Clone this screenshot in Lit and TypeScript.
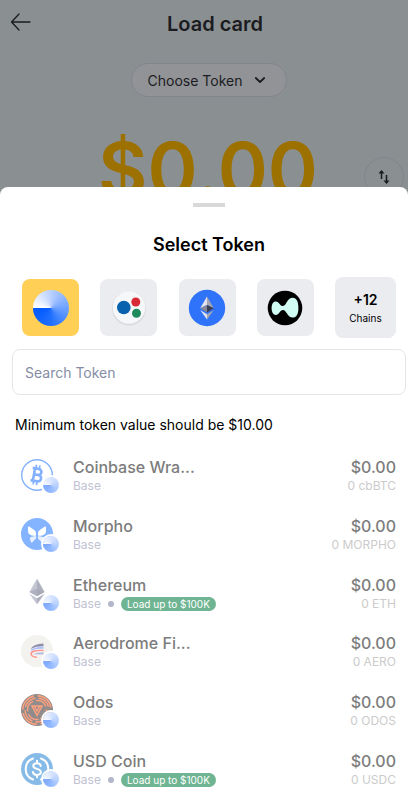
import { LitElement, html, css, svg, nothing, type TemplateResult } from "lit";
import { customElement, property } from "lit/decorators.js";

interface Token {
  name: string;
  symbol: string;
  promo?: boolean;
  icon: TemplateResult;
}

const ethereum = (cx: number, cy: number, s: number) => svg`
  <g transform="translate(${cx} ${cy}) scale(${s})">
    <path d="M0-13-8 1 0-3z" fill="#e3e4ea" />
    <path d="M0-13 8 1 0-3z" fill="#a3a5b0" />
    <path d="M-8 1 0-3V6z" fill="#85879a" />
    <path d="M8 1 0-3V6z" fill="#3d3f52" />
    <path d="M-8 3 0 8V14z" fill="#e3e4ea" />
    <path d="M8 3 0 8V14z" fill="#a3a5b0" />
  </g>`;

const bitcoinIcon = html`<svg viewBox="0 0 32 32" aria-hidden="true">
  <circle cx="16" cy="16" r="15.3" fill="#fff" stroke="#0b66ff" stroke-width="1.4" />
  <g transform="rotate(10 16 16)" fill="none" stroke="#0b66ff" stroke-width="2.6">
    <path d="M10.5 9.7h6.300a3 3 0 0 1 0 6.100h-4h4.600a3.200 3.200 0 0 1 0 6.400h-6.900M12.900 9.500v12.600" />
    <path d="M13.800 6v3.500M17.200 6v3.500M13.800 22.500V26M17.200 22.500V26" stroke-width="1.700" />
  </g>
</svg>`;

const morphoIcon = html`<svg viewBox="0 0 32 32" aria-hidden="true">
  <circle cx="16" cy="16" r="16" fill="#0b6bff" />
  <path d="M7 9.200c0-.7.6-1 1.200-.6l5 3.400c1.200.9 1.800 2 1.800 3.600v1.800c-1 .5-2.400.4-4 0C8 16.700 7 15.500 7 13z" fill="#fff" />
  <path d="M25 9.200c0-.7-.6-1-1.200-.6l-5 3.400c-1.200.9-1.800 2-1.800 3.600v1.800c1 .5 2.400.4 4 0 3-.7 4-1.900 4-4.400z" fill="#fff" />
  <path d="M15 18v2.500l-3.600 3.800c-.6.5-1.300.4-1.500-.3l-.9-3c-.4-1.500.5-2 2-2.300zM17 18v2.500l3.600 3.800c.6.5 1.300.4 1.500-.3l.9-3c.4-1.500-.5-2-2-2.300z" fill="#fff" fill-opacity=".8" />
</svg>`;

const ethereumIcon = html`<svg viewBox="0 0 32 32" aria-hidden="true">
  <g transform="translate(16 14) scale(.95)">
    <path d="M0-13-8 1 0 5.500z" fill="#8a8ca6" />
    <path d="M0-13 8 1 0 5.500z" fill="#62647f" />
    <path d="M-8 1 0-2.500 8 1 0 5.500z" fill="#4a4c69" fill-opacity=".6" />
    <path d="M-8 3 0 7.500V14z" fill="#8a8ca6" />
    <path d="M8 3 0 7.500V14z" fill="#62647f" />
  </g>
</svg>`;

const aerodromeIcon = html`<svg viewBox="0 0 32 32" aria-hidden="true">
  <circle cx="16" cy="16" r="16" fill="#e8e6df" />
  <path d="M10 13.500C12 10.500 16 8.800 22.500 8.500v2.800c-5.500 0-9 .6-12.500 2.700z" fill="#1b1f5a" />
  <path d="M10 15c3-2.300 7-3.300 12.500-3.300v2c-5.500-.3-9.500.3-12.500 2.500z" fill="#5f83ff" />
  <path d="M22.500 15.500c-7-.6-12.500 1-12.500 3.200 0 1.900 2.200 3.200 6 3.700" fill="none" stroke="#ff2a1a" stroke-width="1.400" />
  <path d="M12 19.500c2-1.600 6-2.300 10.500-2v2c-4.500-.3-8 0-10.500 0z" fill="#5d72c9" />
</svg>`;

const odosIcon = html`<svg viewBox="0 0 32 32" aria-hidden="true">
  <circle cx="16" cy="16" r="16" fill="#241c1c" />
  <g fill="none" stroke="#ff4300" stroke-width="1.400">
    <circle cx="16" cy="16" r="14.300" stroke-dasharray="19 3.500" />
    <circle cx="16" cy="16" r="11.900" stroke-dasharray="14 3" transform="rotate(30 16 16)" />
    <circle cx="16" cy="16" r="9.500" stroke-dasharray="12 3.200" transform="rotate(80 16 16)" />
    <path d="M11 12h10L16 21.500zM13.500 12.500 16 17l2.500-4.500" stroke-width="1.500" />
  </g>
</svg>`;

const usdcIcon = html`<svg viewBox="0 0 32 32" aria-hidden="true">
  <circle cx="16" cy="16" r="16" fill="#1078d1" />
  <g fill="none" stroke="#fff" stroke-width="2" stroke-linecap="round">
    <path d="M12 5.500a11.200 11.200 0 0 0 0 21M20 5.500a11.200 11.200 0 0 1 0 21" />
    <path d="M19.800 13c-.3-1.800-1.700-2.800-3.800-2.800s-3.700 1-3.700 2.700c0 4 7.600 2 7.600 6.200 0 1.700-1.600 2.800-3.900 2.800s-3.900-1.100-4.100-3M16 7.800v2.200M16 22v2.200" />
  </g>
</svg>`;

const tokens: Token[] = [
  { name: "Coinbase Wra...", symbol: "cbBTC", icon: bitcoinIcon },
  { name: "Morpho", symbol: "MORPHO", icon: morphoIcon },
  { name: "Ethereum", symbol: "ETH", promo: true, icon: ethereumIcon },
  { name: "Aerodrome Fi...", symbol: "AERO", icon: aerodromeIcon },
  { name: "Odos", symbol: "ODOS", icon: odosIcon },
  { name: "USD Coin", symbol: "USDC", promo: true, icon: usdcIcon },
];

@customElement("token-row")
export class TokenRow extends LitElement {
  @property({ attribute: false }) token!: Token;

  static styles = css`
    :host {
      display: flex;
      align-items: center;
      gap: 20px;
      padding: 0 12px 0 21px;
    }
    .icon {
      position: relative;
      flex: none;
      width: 32px;
      height: 32px;
      opacity: 0.5;
    }
    .icon svg {
      display: block;
      width: 100%;
      height: 100%;
    }
    .chain {
      position: absolute;
      right: -6px;
      bottom: -2px;
      width: 16px;
      height: 16px;
      border-radius: 50%;
      background: conic-gradient(from 270deg, #e8f0ff, #b4ccff 25%, #7aa9ff 50%, #2a76ff 75%, #0052ff);
      box-shadow: 0 0 0 2px #fff;
    }
    .info {
      flex: 1;
      min-width: 0;
    }
    .value {
      text-align: right;
    }
    .name,
    .fiat {
      font-size: 16px;
      line-height: 22px;
      font-weight: 500;
      color: #7c7c7c;
      white-space: nowrap;
    }
    .sub {
      display: flex;
      align-items: center;
      gap: 7px;
      font-size: 12px;
      line-height: 16px;
      color: #bfc2d2;
    }
    .dot {
      width: 6px;
      height: 6px;
      border-radius: 50%;
      background: #b2b6ca;
    }
    .promo {
      padding: 0 6px;
      border-radius: 7px;
      font-size: 10px;
      line-height: 14px;
      color: #fff;
      background: #6fb593;
      white-space: nowrap;
    }
    .amount {
      font-size: 12px;
      line-height: 16px;
      color: #cbcbcb;
    }
  `;

  render() {
    const t = this.token;
    return html`
      <div class="icon">${t.icon}<span class="chain"></span></div>
      <div class="info">
        <div class="name">${t.name}</div>
        <div class="sub">
          <span>Base</span>
          ${t.promo
            ? html`<span class="dot"></span><span class="promo">Load up to $100K</span>`
            : nothing}
        </div>
      </div>
      <div class="value">
        <div class="fiat">$0.00</div>
        <div class="amount">0 ${t.symbol}</div>
      </div>
    `;
  }
}

@customElement("app-root")
export class AppRoot extends LitElement {
  static styles = css`
    :host {
      display: flex;
      flex-direction: column;
      min-height: 100vh;
      box-sizing: border-box;
      background: #8a8f92;
      color: #000;
      font-family: Inter, "Liberation Sans", sans-serif;
    }
    button {
      font: inherit;
      color: inherit;
      margin: 0;
      padding: 0;
      border: 0;
      background: none;
    }
    h1,
    h2,
    p,
    ul {
      margin: 0;
      padding: 0;
    }
    svg {
      display: block;
    }
    .page {
      display: flex;
      flex-direction: column;
      height: 187px;
      color: #1b1c1f;
    }
    .page > * {
      flex: none;
    }
    .bar {
      display: grid;
      grid-template-columns: 22px 1fr 10px;
      align-items: center;
      padding: 10px 0 0 10px;
    }
    .title {
      font-size: 20px;
      line-height: 28px;
      font-weight: 600;
      text-align: center;
    }
    .back {
      margin-bottom: 4px;
    }
    .choose {
      display: flex;
      align-items: center;
      align-self: center;
      gap: 12px;
      box-sizing: border-box;
      height: 34px;
      margin: 25px 0 0 10px;
      padding: 0 20px 0 16px;
      border: 1px solid #84858c;
      border-radius: 17px;
      background: #929397;
      font-size: 14px;
    }
    .amount-row {
      display: grid;
      grid-template-columns: 44px 1fr 44px;
      padding: 28px 0 0;
    }
    .amount {
      grid-column: 2;
      font-size: 76px;
      line-height: 88px;
      font-weight: 600;
      text-align: center;
      color: #9d7100;
      margin-left: 8px;
    }
    .swap {
      display: grid;
      place-items: center;
      box-sizing: border-box;
      width: 40px;
      height: 40px;
      margin-top: 32px;
      border: 1px solid #82868b;
      border-radius: 50%;
    }
    .sheet {
      position: relative;
      flex: 1;
      display: flex;
      flex-direction: column;
      padding: 16px 0 8px;
      border-radius: 8px 8px 0 0;
      background: #fff;
    }
    .handle {
      align-self: center;
      width: 32px;
      height: 4px;
      margin-left: 10px;
      background: #d9d9d9;
    }
    .heading {
      margin: 24px 0 0 10px;
      font-size: 18px;
      line-height: 28px;
      font-weight: 600;
      text-align: center;
    }
    .chains {
      display: flex;
      align-items: center;
      justify-content: space-between;
      padding: 18px 12px 0 22px;
    }
    .tile {
      display: grid;
      place-items: center;
      width: 57px;
      height: 57px;
      border-radius: 8px;
      background: #ebecf0;
    }
    .tile.active {
      background: #ffcf56;
    }
    .tile.more {
      width: 61px;
      height: 61px;
      align-content: center;
      gap: 2px;
    }
    .base {
      width: 36px;
      height: 36px;
      border-radius: 50%;
      background: conic-gradient(from 270deg, #fff, #b9d0ff 25%, #6fa2ff 50%, #1f6fff 75%, #0058ff);
    }
    .count {
      font-size: 14px;
      line-height: 18px;
      font-weight: 600;
    }
    .label {
      font-size: 10px;
      line-height: 14px;
    }
    .search {
      box-sizing: border-box;
      height: 46px;
      margin: 11px 2px 0 12px;
      padding: 0 12px;
      border: 1px solid #e6e6e6;
      border-radius: 8px;
      font: inherit;
      font-size: 14px;
      background: #fff;
    }
    .search::placeholder {
      color: #858da6;
      opacity: 1;
    }
    .note {
      margin: 20px 15px 11px;
      font-size: 14px;
      line-height: 20px;
    }
    .list {
      flex: 1;
      display: grid;
      grid-auto-rows: minmax(56px, 1fr);
      list-style: none;
    }
    .item {
      display: grid;
    }
  `;

  render() {
    return html`
      <section class="page">
        <header class="bar">
          <button class="back" aria-label="Back">
            <svg width="22" height="18" viewBox="0 0 22 18" fill="none" stroke="#1b1c1f" stroke-width="1.300" stroke-linecap="round" stroke-linejoin="round">
              <path d="M20 9H1.500M9 1 1.500 9 9 17" />
            </svg>
          </button>
          <h1 class="title">Load card</h1>
        </header>
        <button class="choose">
          Choose Token
          <svg width="12" height="8" viewBox="0 0 12 8" fill="none" stroke="#1b1c1f" stroke-width="1.800" stroke-linecap="round" stroke-linejoin="round">
            <path d="M1.800 2 6 6l4.200-4" />
          </svg>
        </button>
        <div class="amount-row">
          <div class="amount">$0.00</div>
          <button class="swap" aria-label="Swap currency">
            <svg width="14" height="16" viewBox="0 0 14 16" fill="none" stroke="#1b1c1f" stroke-width="1.500">
              <path d="M4.500 10V2M9.500 6v8" />
              <path d="M1.500 4.500 4.500 1l3 3.500zM6.500 11.500l3 3.500 3-3.500z" fill="#1b1c1f" stroke="none" />
            </svg>
          </button>
        </div>
      </section>
      <main class="sheet">
        <div class="handle"></div>
        <h2 class="heading">Select Token</h2>
        <div class="chains">
          <button class="tile active" aria-label="Base"><span class="base"></span></button>
          <button class="tile" aria-label="Multichain">
            <svg width="38" height="38" viewBox="0 0 38 38">
              <circle cx="19" cy="19.500" r="17" fill="#d9dbdf" />
              <circle cx="19" cy="18.500" r="16.200" fill="#f5f7f9" />
              <circle cx="13.800" cy="18.500" r="6.800" fill="#0962ad" />
              <circle cx="25.800" cy="13" r="4.500" fill="#d72a36" />
              <circle cx="26.500" cy="24.300" r="4.500" fill="#1f8a5b" />
            </svg>
          </button>
          <button class="tile" aria-label="Ethereum">
            <svg width="38" height="38" viewBox="0 0 38 38">
              <circle cx="19" cy="19" r="18.200" fill="#3073fb" />
              ${ethereum(19, 18.5, 0.85)}
            </svg>
          </button>
          <button class="tile" aria-label="Hyperliquid">
            <svg width="36" height="36" viewBox="0 0 36 36">
              <circle cx="18" cy="18" r="17.300" fill="#000" />
              <path d="M4.600 18c0-4 1.600-6.600 4.200-6.600 3.300 0 4.200 4.600 7.200 4.600 3.500 0 4-8.200 9.700-8.200 4 0 5.700 4.200 5.700 10.200S29.500 27.600 25.700 27.600c-5.200 0-6.200-7.600-9.700-7.600-3 0-4 5-7.200 5-2.600 0-4.200-3-4.200-7z" fill="#d0fcf4" />
            </svg>
          </button>
          <button class="tile more">
            <span class="count">+12</span>
            <span class="label">Chains</span>
          </button>
        </div>
        <input class="search" type="text" placeholder="Search Token" aria-label="Search Token" />
        <p class="note">Minimum token value should be $10.00</p>
        <ul class="list">
          ${tokens.map((t) => html`<li class="item"><token-row .token=${t}></token-row></li>`)}
        </ul>
      </main>
    `;
  }
}
